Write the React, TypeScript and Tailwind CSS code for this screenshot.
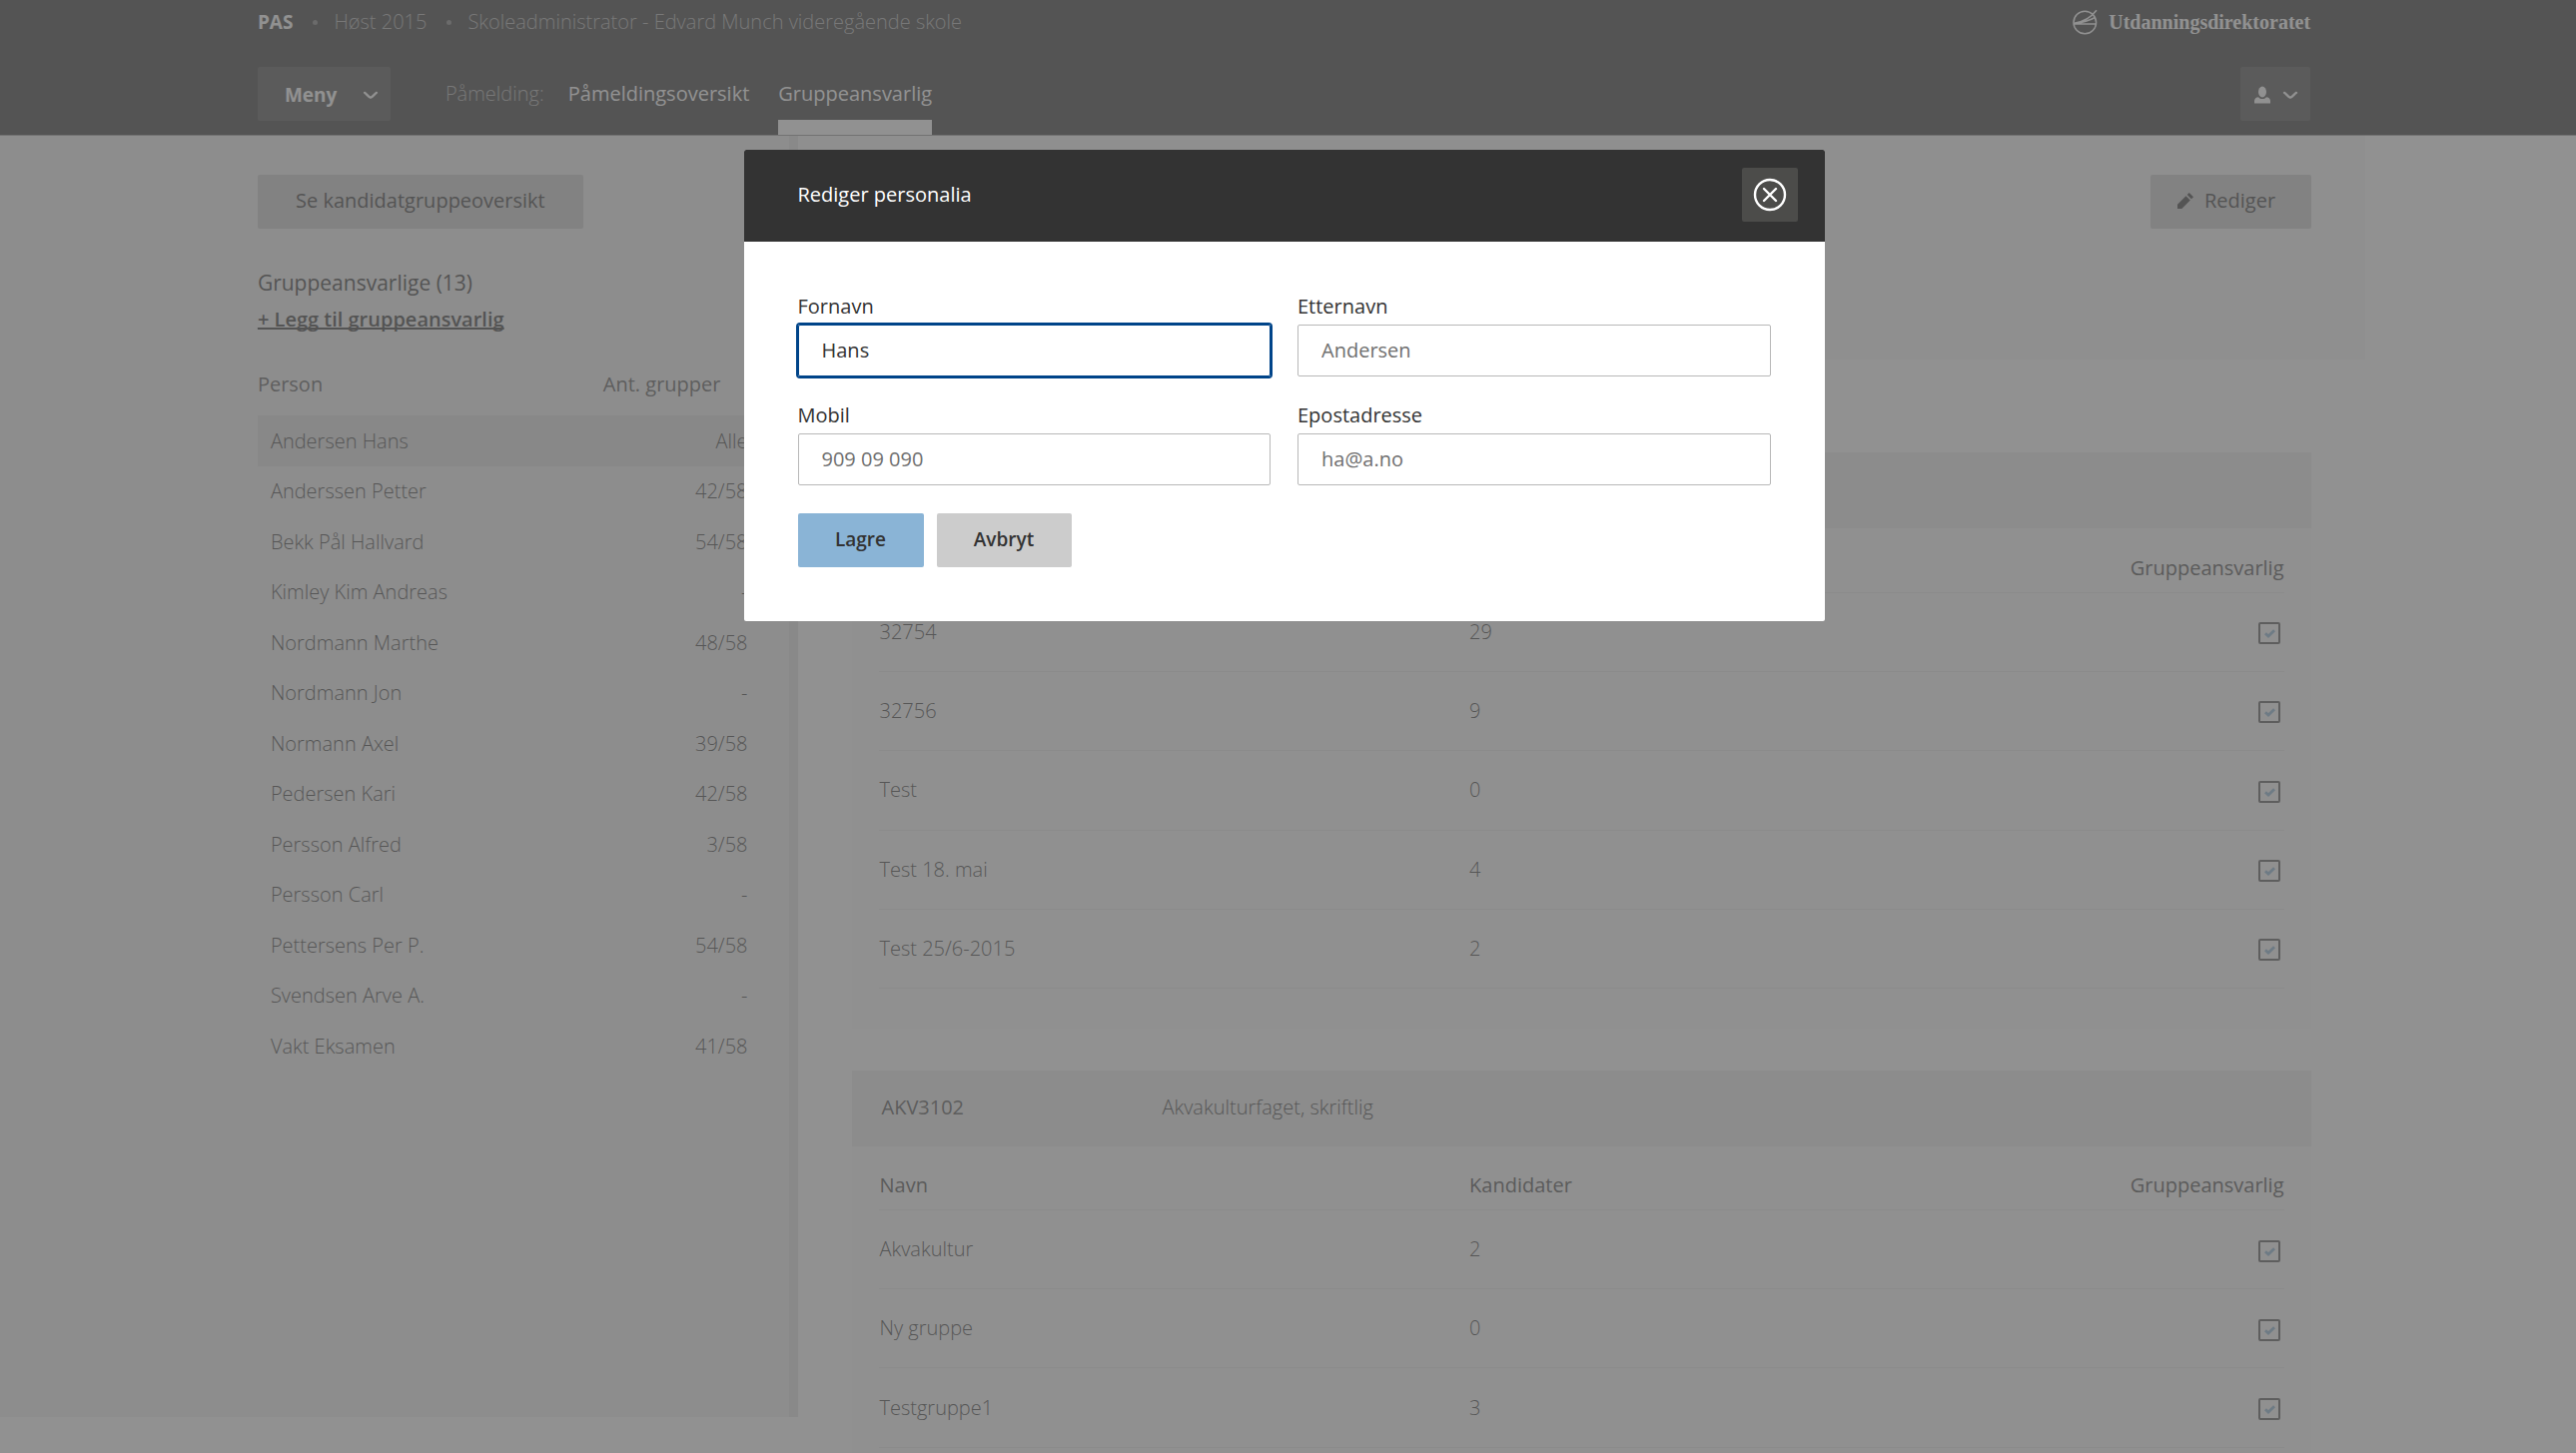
import { useState } from "react";
import type { ReactNode } from "react";

interface Person {
  name: string;
  groups: string;
}

interface Group {
  name: string;
  candidates: number;
}

const people: Person[] = [
  { name: "Andersen Hans", groups: "Alle" },
  { name: "Anderssen Petter", groups: "42/58" },
  { name: "Bekk Pål Hallvard", groups: "54/58" },
  { name: "Kimley Kim Andreas", groups: "-" },
  { name: "Nordmann Marthe", groups: "48/58" },
  { name: "Nordmann Jon", groups: "-" },
  { name: "Normann Axel", groups: "39/58" },
  { name: "Pedersen Kari", groups: "42/58" },
  { name: "Persson Alfred", groups: "3/58" },
  { name: "Persson Carl", groups: "-" },
  { name: "Pettersens Per P.", groups: "54/58" },
  { name: "Svendsen Arve A.", groups: "-" },
  { name: "Vakt Eksamen", groups: "41/58" },
];

const firstGroups: Group[] = [
  { name: "32754", candidates: 29 },
  { name: "32756", candidates: 9 },
  { name: "Test", candidates: 0 },
  { name: "Test 18. mai", candidates: 4 },
  { name: "Test 25/6-2015", candidates: 2 },
];

const secondGroups: Group[] = [
  { name: "Akvakultur", candidates: 2 },
  { name: "Ny gruppe", candidates: 0 },
  { name: "Testgruppe1", candidates: 3 },
];

// Icons
function Chevron() {
  return (
    <svg viewBox="0 0 16 9" className="h-[9px] w-4" fill="none" stroke="currentColor" strokeWidth="2.2" strokeLinecap="round" strokeLinejoin="round" aria-hidden="true">
      <path d="M2 1.8C4 3 6 6.2 8 6.8 10 6.2 12 3 14 1.8" />
    </svg>
  );
}

function UserIcon() {
  return (
    <svg viewBox="0 0 16 18" className="h-[18px] w-4" fill="currentColor" aria-hidden="true">
      <ellipse cx="8" cy="6" rx="4" ry="5.4" />
      <path d="M0 17.5v-2.6C0 12.6 2 11.4 4 11.2c1 1.2 2.4 1.9 4 1.9s3-.7 4-1.9c2 .2 4 1.4 4 3.7v2.6z" />
    </svg>
  );
}

function PencilIcon() {
  return (
    <svg viewBox="0 0 17 17" className="h-4 w-4" fill="currentColor" aria-hidden="true">
      <path d="M0 17v-4.6L9 3.4 13.6 8l-9 9zM10.3 2.2 12.5 0 17 4.5l-2.2 2.2z" />
    </svg>
  );
}

function CloseIcon() {
  return (
    <svg viewBox="0 0 34 34" className="h-[34px] w-[34px]" fill="none" stroke="currentColor" strokeWidth="2.4" strokeLinecap="round" aria-hidden="true">
      <circle cx="17" cy="17" r="15" />
      <path d="m11 11 12 12M23 11 11 23" />
    </svg>
  );
}

function Logo() {
  return (
    <svg viewBox="0 0 25 26" className="h-[26px] w-[25px]" fill="none" stroke="currentColor" strokeWidth="1.5" aria-hidden="true">
      <circle cx="12.3" cy="13.5" r="11.3" />
      <path d="M1 15h22.6M1.500 14.200C10 13 18 9 24 1.200M1.500 14.800C10 13.500 16 12 22.500 8.500" />
    </svg>
  );
}

interface FieldProps {
  id: string;
  label: string;
  value: string;
  type?: string;
  active?: boolean;
}

function Field({ id, label, value, type = "text", active }: FieldProps) {
  return (
    <div className="flex flex-col gap-1">
      <label htmlFor={id} className="leading-7 text-[#333]">
        {label}
      </label>
      <input
        id={id}
        type={type}
        defaultValue={value}
        className={`h-[52px] w-full rounded-xs border px-[23px] pb-0.5 outline-none ${
          active ? "border-[#004489] text-[#333] ring-2 ring-[#004489]" : "border-[#b8b8b8] text-[#707070]"
        }`}
      />
    </div>
  );
}

function Checkbox({ label }: { label: string }) {
  return (
    <span className="relative mr-1 inline-flex h-[22px] w-[22px] align-middle">
      <input type="checkbox" defaultChecked aria-label={label} className="peer h-full w-full appearance-none rounded-xs border-2 border-[#555]" />
      <svg viewBox="0 0 11 9" className="absolute top-[7px] left-[6px] hidden h-[9px] w-[11px] peer-checked:block" fill="none" stroke="#8ab4d6" strokeWidth="2.8" aria-hidden="true">
        <path d="M1 4.2 4 7 10 1.2" />
      </svg>
    </span>
  );
}

interface SubjectCardProps {
  code?: string;
  title?: string;
  groups: Group[];
}

function SubjectCard({ code, title, groups }: SubjectCardProps) {
  return (
    <section className="bg-[#fafafa] pb-10">
      <header className="flex h-[76px] items-center bg-[#efefef] px-[29px] pb-0.5">
        <h2 className="w-[281px] font-medium text-[#505050]">{code}</h2>
        <p className="font-light text-[#3a3a3a]">{title}</p>
      </header>
      <div className="px-[27px]">
        <table className="w-full">
          <thead>
            <tr className="h-16 border-b border-[#ebebeb] text-left text-[#4a4a4a]">
              <th className="w-[42%] pt-4 font-normal">Navn</th>
              <th className="pt-4 font-normal">Kandidater</th>
              <th className="pt-4 text-right font-normal">Gruppeansvarlig</th>
            </tr>
          </thead>
          <tbody>
            {groups.map((group) => (
              <tr key={group.name} className="h-[79px] border-b border-[#ebebeb] font-light text-[#3a3a3a] [&:nth-child(3n)]:h-20">
                <td>{group.name}</td>
                <td>{group.candidates}</td>
                <td className="text-right">
                  <Checkbox label={`Gruppeansvarlig for ${group.name}`} />
                </td>
              </tr>
            ))}
          </tbody>
        </table>
      </div>
    </section>
  );
}

function GreyButton({ children, className }: { children: ReactNode; className: string }) {
  return (
    <button type="button" className={`flex h-[54px] items-center justify-center rounded-xs bg-[#ccc] pb-0.5 font-medium text-[#333] ${className}`}>
      {children}
    </button>
  );
}

function Header() {
  return (
    <header className="border-b border-[#999] bg-[#333] pr-[calc(10%+8px)] pl-[10%] text-white">
      <div className="flex h-11 items-center justify-between">
        <div className="flex items-center text-[#aaa]">
          <strong className="text-[19px] font-bold text-white">PAS</strong>
          <span className="mr-4 ml-5 h-[5px] w-[5px] rounded-full bg-[#808080]" />
          <span className="font-light">Høst 2015</span>
          <span className="mr-4 ml-5 h-[5px] w-[5px] rounded-full bg-[#808080]" />
          <span className="font-light">Skoleadministrator - Edvard Munch videregående skole</span>
        </div>
        <a href="#" className="flex items-center gap-[11px] font-['Liberation_Serif',serif] font-bold">
          <Logo />
          Utdanningsdirektoratet
        </a>
      </div>
      <div className="mt-[23px] flex h-[68px] items-start">
        <button type="button" className="flex h-[54px] w-[133px] items-center justify-between rounded-xs bg-[#4c4c4a] pt-0.5 pr-3 pl-[27px] text-[19px] font-bold">
          Meny
          <Chevron />
        </button>
        <nav className="ml-[55px] flex h-full flex-1 leading-[53px]" aria-label="Påmelding">
          <span className="mr-6 font-light text-[#aaa]">Påmelding:</span>
          <a href="#" className="mr-[29px]">
            Påmeldingsoversikt
          </a>
          <a href="#" aria-current="page" className="border-b-[15px] border-white">
            Gruppeansvarlig
          </a>
        </nav>
        <button type="button" aria-label="Brukermeny" className="flex h-[54px] w-[70px] items-center justify-center gap-3 rounded-xs bg-[#4c4c4a] pt-0.5 pl-0.5">
          <UserIcon />
          <Chevron />
        </button>
      </div>
    </header>
  );
}

function Sidebar() {
  return (
    <aside className="mb-9 w-[31%] shrink-0 border-r-[9px] border-[#e3e3e3] bg-[#f2f2f2] pt-[39px] pr-[30px] pl-[10%]">
      <GreyButton className="w-[326px]">Se kandidatgruppeoversikt</GreyButton>
      <h1 className="mt-10 text-[21px] leading-7 text-[#333]">Gruppeansvarlige (13)</h1>
      <a href="#" className="mt-[9px] block w-fit leading-7 font-semibold text-[#333] underline decoration-2 underline-offset-1 [text-decoration-skip-ink:none]">
        + Legg til gruppeansvarlig
      </a>
      <table className="mt-[28px] w-full">
        <thead>
          <tr className="h-[54px] text-[#555]">
            <th className="pb-2 text-left font-normal">Person</th>
            <th className="pr-[39px] pb-2 text-right font-normal">Ant. grupper</th>
          </tr>
        </thead>
        <tbody>
          {people.map((person, index) => (
            <tr key={person.name} className={`font-light text-[#3a3a3a] odd:h-[51px] even:h-[50px] ${index === 0 ? "bg-[#dfdfdf]" : ""}`}>
              <td className="pl-[13px]">{person.name}</td>
              <td className="pr-3 text-right">{person.groups}</td>
            </tr>
          ))}
        </tbody>
      </table>
    </aside>
  );
}

function EditDialog({ onClose }: { onClose: () => void }) {
  return (
    <div className="fixed inset-0 flex items-start justify-center bg-[#636363]/70 pt-[150px] pr-2">
      <div role="dialog" aria-modal="true" aria-labelledby="dialog-title" className="w-[1082px] max-w-full overflow-hidden rounded-xs bg-white">
        <div className="flex h-[92px] items-center justify-between bg-[#333] pr-[27px] pb-0.5 pl-[54px] text-white">
          <h2 id="dialog-title">Rediger personalia</h2>
          <button type="button" aria-label="Lukk" onClick={onClose} className="flex h-[54px] w-14 items-center justify-center rounded-xs bg-[#4c4c4a]">
            <CloseIcon />
          </button>
        </div>
        <form className="px-[54px] pt-[51px] pb-[54px]" onSubmit={(e) => e.preventDefault()}>
          <div className="grid grid-cols-2 gap-x-[27px] gap-y-[25px]">
            <Field id="fornavn" label="Fornavn" value="Hans" active />
            <Field id="etternavn" label="Etternavn" value="Andersen" />
            <Field id="mobil" label="Mobil" value="909 09 090" type="tel" />
            <Field id="epost" label="Epostadresse" value="ha@a.no" type="email" />
          </div>
          <div className="mt-7 flex gap-[13px] text-[19px] font-semibold text-[#333]">
            <button type="submit" className="h-[54px] w-[126px] rounded-xs bg-[#8ab4d6] pb-0.5">
              Lagre
            </button>
            <button type="button" onClick={onClose} className="h-[54px] w-[135px] rounded-xs bg-[#ccc] pb-0.5">
              Avbryt
            </button>
          </div>
        </form>
      </div>
    </div>
  );
}

export default function App() {
  const [isEditing, setIsEditing] = useState(true);

  return (
    <div className="flex h-screen flex-col overflow-hidden bg-white font-['Open_Sans',sans-serif] text-[20px]">
      <Header />
      <div className="flex min-h-0 flex-1">
        <Sidebar />
        <main className="mr-[8.2%] flex-1 overflow-hidden">
          <div className="flex justify-end bg-[#f8f8f8] px-[54px] pt-[39px] pb-[131px]">
            <GreyButton className="w-[161px] gap-[11px] pr-2">
              <PencilIcon />
              Rediger
            </GreyButton>
          </div>
          <div className="mt-[93px] flex flex-col gap-[42px] px-[54px]">
            <SubjectCard groups={firstGroups} />
            <SubjectCard code="AKV3102" title="Akvakulturfaget, skriftlig" groups={secondGroups} />
          </div>
        </main>
      </div>
      {isEditing && <EditDialog onClose={() => setIsEditing(false)} />}
    </div>
  );
}
